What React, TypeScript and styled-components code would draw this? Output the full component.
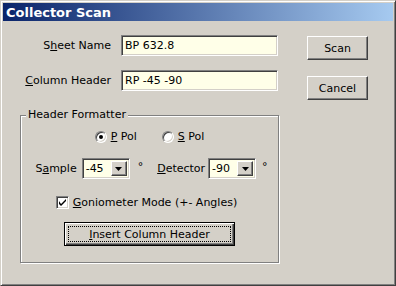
import styled, { createGlobalStyle } from 'styled-components';

const GlobalStyle = createGlobalStyle`
  html, body {
    margin: 0;
    padding: 0;
    background: #d4d0c8;
  }
  * {
    box-sizing: border-box;
  }
`;

const sunken = `
  border: 1px solid;
  border-color: #808080 #ffffff #ffffff #808080;
  box-shadow: inset 1px 1px 0 #404040, inset -1px -1px 0 #d4d0c8;
`;

const raised = `
  border: 1px solid;
  border-color: #ffffff #404040 #404040 #ffffff;
  box-shadow: inset -1px -1px 0 #808080;
`;

// text with the access key underlined
const Mnemonic = ({ text, at }: { text: string; at: number }) => (
  <span>
    {text.slice(0, at)}
    <u>{text[at]}</u>
    {text.slice(at + 1)}
  </span>
);

const Dropdown = ({ value }: { value: string }) => (
  <S.Select>
    <S.SelectValue>{value}</S.SelectValue>
    <S.SelectButton>
      <svg width="7" height="4" viewBox="0 0 7 4">
        <path d="M0 0h7L3.5 4z" fill="#000" />
      </svg>
    </S.SelectButton>
  </S.Select>
);

const App = () => {
  return (
    <>
      <GlobalStyle />
      <S.Window>
        <S.TitleBar>Collector Scan</S.TitleBar>
        <S.Body>
          <S.LeftColumn>
            <S.FieldGrid>
              <S.FieldLabel>
                <Mnemonic text="Sheet Name" at={1} />
              </S.FieldLabel>
              <S.TextInput>BP 632.8</S.TextInput>
              <S.FieldLabel>
                <Mnemonic text="Column Header" at={0} />
              </S.FieldLabel>
              <S.TextInput>RP -45 -90</S.TextInput>
            </S.FieldGrid>

            <S.GroupBox>
              <S.Legend>Header Formatter</S.Legend>
              <S.GroupContent>
                <S.RadioRow>
                  <S.Option>
                    <S.Radio $checked />
                    <Mnemonic text="P Pol" at={0} />
                  </S.Option>
                  <S.Option>
                    <S.Radio />
                    <Mnemonic text="S Pol" at={0} />
                  </S.Option>
                </S.RadioRow>

                <S.AngleRow>
                  <S.AngleField $gap={5}>
                    <Mnemonic text="Sample" at={1} />
                    <Dropdown value="-45" />
                    <S.Degree>°</S.Degree>
                  </S.AngleField>
                  <S.AngleField $gap={3}>
                    <Mnemonic text="Detector" at={0} />
                    <Dropdown value="-90" />
                    <S.Degree>°</S.Degree>
                  </S.AngleField>
                </S.AngleRow>

                <S.CheckRow>
                  <S.CheckBox>
                    <svg width="7" height="7" viewBox="0 0 7 7">
                      <path d="M0 2v3l2 2L7 2V0L2 5z" fill="#000" />
                    </svg>
                  </S.CheckBox>
                  <Mnemonic text="Goniometer Mode (+- Angles)" at={0} />
                </S.CheckRow>

                <S.DefaultButton>
                  <Mnemonic text="Insert Column Header" at={0} />
                </S.DefaultButton>
              </S.GroupContent>
            </S.GroupBox>
          </S.LeftColumn>

          <S.ButtonColumn>
            <S.Button>Scan</S.Button>
            <S.Button>Cancel</S.Button>
          </S.ButtonColumn>
        </S.Body>
      </S.Window>
    </>
  );
};

export default App;

const S = {
  Window: styled.div`
    width: 396px;
    height: 286px;
    padding: 2px;
    background: #d4d0c8;
    border: 1px solid;
    border-color: #d4d0c8 #404040 #404040 #d4d0c8;
    box-shadow: inset 1px 1px 0 #ffffff, inset -1px -1px 0 #808080;
    font-family: 'DejaVu Sans', 'Liberation Sans', sans-serif;
    font-size: 11px;
    color: #000;
    display: flex;
    flex-direction: column;
  `,
  TitleBar: styled.div`
    height: 18px;
    padding-left: 3px;
    display: flex;
    align-items: center;
    background: linear-gradient(to right, #0a246a, #a6caf0);
    color: #ffffff;
    font-size: 13px;
    font-weight: 700;
  `,
  Body: styled.div`
    display: flex;
    align-items: flex-start;
    gap: 28px;
    padding: 14px 0 0 17px;
  `,
  LeftColumn: styled.div`
    width: 259px;
    display: flex;
    flex-direction: column;
  `,
  FieldGrid: styled.div`
    display: grid;
    grid-template-columns: 91px 157px;
    column-gap: 10px;
    row-gap: 14px;
    align-items: center;
  `,
  FieldLabel: styled.label`
    justify-self: end;
    white-space: nowrap;
  `,
  TextInput: styled.div`
    ${sunken}
    height: 21px;
    padding: 0 3px;
    display: flex;
    align-items: center;
    background: #ffffe8;
  `,

  // Group box
  GroupBox: styled.fieldset`
    margin: 17px 0 0;
    padding: 0;
    min-width: 0;
    border: 1px solid #808080;
    box-shadow: inset 1px 1px 0 #ffffff, 1px 1px 0 #ffffff;
  `,
  Legend: styled.legend`
    margin-left: 5px;
    padding: 0 2px;
    line-height: 14px;
    background: #d4d0c8;
  `,
  GroupContent: styled.div`
    display: flex;
    flex-direction: column;
    align-items: center;
    padding: 8px 0 16px;
  `,
  RadioRow: styled.div`
    display: flex;
    gap: 25px;
    height: 13px;
    align-items: center;
  `,
  Option: styled.label`
    display: flex;
    align-items: center;
    gap: 4px;
  `,
  Radio: styled.span<{ $checked?: boolean }>`
    width: 12px;
    height: 12px;
    border-radius: 50%;
    border: 1px solid;
    border-color: #808080 #ffffff #ffffff #808080;
    box-shadow: inset 1px 1px 0 #404040, inset -1px -1px 0 #d4d0c8;
    background: #ffffff;
    display: flex;
    align-items: center;
    justify-content: center;
    &::after {
      content: '';
      width: 4px;
      height: 4px;
      border-radius: 50%;
      background: ${(p) => (p.$checked ? '#000' : 'transparent')};
    }
  `,
  AngleRow: styled.div`
    display: flex;
    gap: 14px;
    margin-top: 15px;
    padding-left: 4px;
  `,
  AngleField: styled.div<{ $gap: number }>`
    display: flex;
    align-items: center;
    gap: ${(p) => p.$gap}px;
  `,
  Select: styled.div`
    ${sunken}
    width: 48px;
    height: 21px;
    padding: 2px;
    display: flex;
    background: #ffffe8;
  `,
  SelectValue: styled.span`
    flex: 1;
    display: flex;
    align-items: center;
    padding-left: 1px;
  `,
  SelectButton: styled.span`
    ${raised}
    width: 16px;
    background: #d4d0c8;
    display: flex;
    align-items: center;
    justify-content: center;
  `,
  Degree: styled.span`
    margin-left: 3px;
    align-self: flex-start;
    margin-top: 2px;
  `,
  CheckRow: styled.label`
    display: flex;
    align-items: center;
    gap: 4px;
    margin-top: 17px;
    margin-right: 6px;
  `,
  CheckBox: styled.span`
    ${sunken}
    width: 13px;
    height: 13px;
    background: #ffffff;
    display: flex;
    align-items: center;
    justify-content: center;
  `,

  // Buttons
  ButtonColumn: styled.div`
    display: flex;
    flex-direction: column;
    gap: 16px;
    margin-top: 1px;
  `,
  Button: styled.button`
    ${raised}
    width: 61px;
    height: 24px;
    padding: 0;
    background: #d4d0c8;
    font: inherit;
    color: #000;
  `,
  DefaultButton: styled.button`
    width: 171px;
    height: 24px;
    margin-top: 13px;
    padding: 0;
    border: 1px solid #000;
    box-shadow: inset 1px 1px 0 #ffffff, inset -1px -1px 0 #404040,
      inset -2px -2px 0 #808080;
    outline: 1px dotted #000;
    outline-offset: -5px;
    background: #d4d0c8;
    font: inherit;
    color: #000;
  `,
};
